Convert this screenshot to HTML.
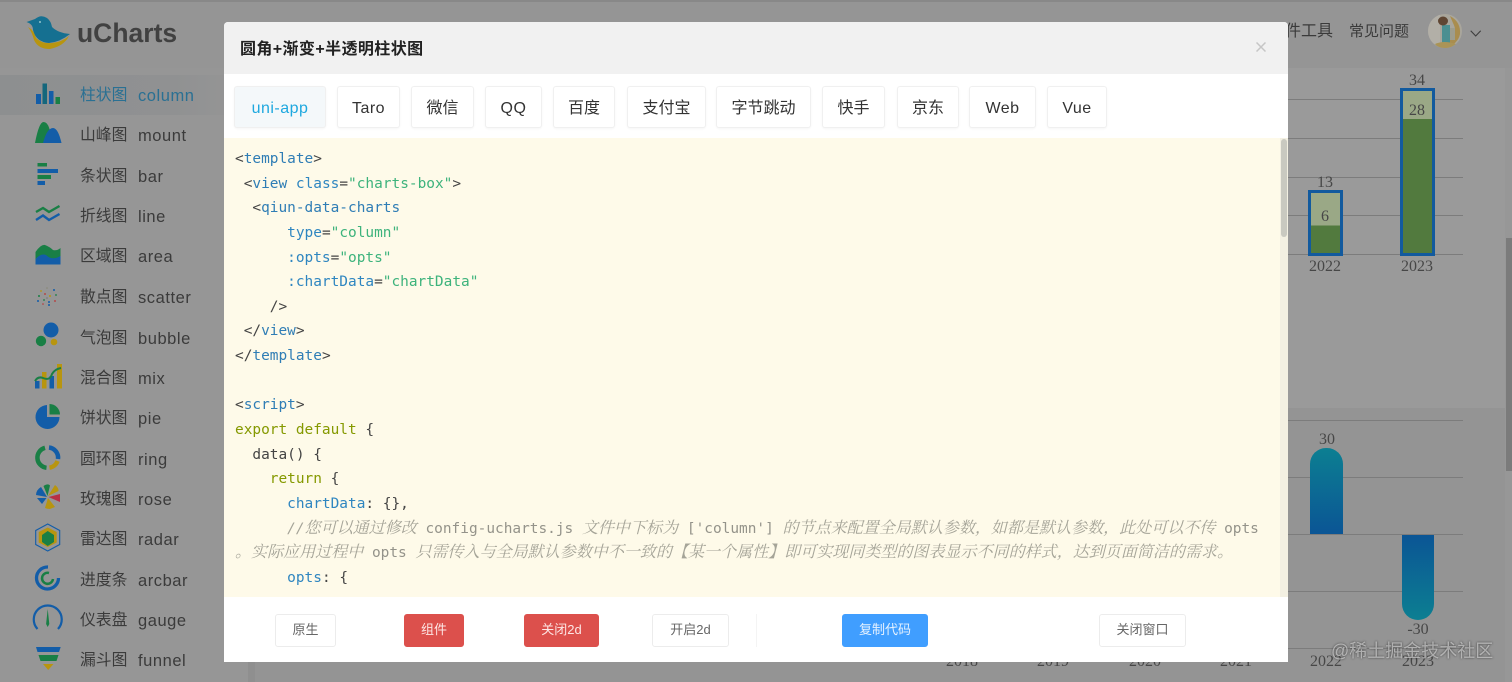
<!DOCTYPE html>
<html lang="zh"><head><meta charset="utf-8"><title>uCharts</title>
<style>
*{box-sizing:border-box;margin:0;padding:0}
html,body{width:1512px;height:682px;overflow:hidden;background:#969696}
body{position:relative;font-family:"Liberation Sans","Noto Sans CJK SC",sans-serif;color:#3a3a3a}
.a{position:absolute}
.si{position:absolute;left:80px;font-size:15.800px;line-height:24px;white-space:nowrap;color:#3b3b3b;margin-top:1px}
.si b{font-weight:400;position:absolute;left:58px;top:0;font-size:16.500px;letter-spacing:.55px}
.lb{position:absolute;margin-top:1px;font-family:"Liberation Serif",serif;font-size:16px;line-height:18px;color:#474747;transform:translateX(-50%);white-space:nowrap}
.g{position:absolute;left:1270px;width:193px;height:1px;background:#7c7c7c}
#modal{position:absolute;left:224px;top:22px;width:1064px;height:640px;background:#fff;border-radius:4px 4px 0 0;overflow:hidden}
#hd{height:52px;background:#f1f1f1;font-size:16px;font-weight:700;line-height:56px;padding-left:16px;color:#222;letter-spacing:.4px}
.tab{position:absolute;top:64px;height:42px;background:#fff;border:1px solid #f0f0f0;border-radius:3px;box-shadow:0 1px 2px rgba(0,0,0,.04);text-align:center;font-size:16px;line-height:43px;color:#333;white-space:nowrap}
.tab.l{letter-spacing:.5px}
#code{position:absolute;left:0;top:116px;width:1064px;height:459px;background:#fefae9;overflow:hidden}
#code pre{position:absolute;left:11px;top:9px;font-family:"DejaVu Sans Mono","Liberation Mono",monospace;font-size:14.450px;line-height:24.640px;color:#444;white-space:pre}
.t{color:#2f7db5}.s{color:#3db37c}.k{color:#859900}.p{color:#2f86c0}
.c{color:#a5a498;font-style:italic}.c i{font-family:"Noto Serif CJK SC",serif;font-size:16.050px;font-style:italic;line-height:0}
.c em{color:#94938a;font-style:normal}
.btn{position:absolute;top:592px;height:33px;border:1px solid #ececec;border-radius:3px;background:#fff;text-align:center;font-size:13px;line-height:30px;color:#666;white-space:nowrap}
.red{background:#dc504c;border-color:#dc504c;color:#fde6e5}
.blue{background:#409eff;border-color:#409eff;color:#e6f2ff}
#wm{position:absolute;left:1331px;top:639px;font-size:18px;line-height:24px;white-space:nowrap;color:rgba(210,210,210,.7);text-shadow:0 0 2px rgba(50,50,50,.9)}
</style></head><body>

<div class="a" style="left:0;top:0;width:1512px;height:68px;background:#959595;border-top:2px solid #888"></div>
<div class="a" style="left:255px;top:68px;width:1250px;height:340px;background:#9a9a9a"></div>
<div class="a" style="left:255px;top:408px;width:1250px;height:274px;background:#949494"></div>
<div class="a" style="left:1505px;top:68px;width:7px;height:614px;background:#979797"></div>
<div class="a" style="left:1506px;top:238px;width:6px;height:233px;background:#7b7b7b"></div>
<div class="a" style="left:248px;top:68px;width:7px;height:614px;background:#8f8f8f"></div>
<div class="a" style="left:0;top:75px;width:248px;height:40px;background:linear-gradient(90deg,#8d8f90,#909192 70%,#969696)"></div>

<svg class="a" style="left:0;top:0" width="250" height="682" viewBox="0 0 250 682">
<path fill="#b8950f" d="M28 27Q34 30 36 38Q42 44 52 43Q62 42 69 36Q64 46 50 49Q38 49 34 40Q32 32 28 27Z"/>
<path fill="#157091" d="M26.500 22L35 19Q41 14 47 18Q51 21 52 27Q58 33 70 34Q60 42 49 43Q36 42 33 30Q33 24 26.500 22Z"/>
<circle cx="40" cy="22" r=".9" fill="#bdd"/>
<g fill="#135da8"><rect x="36" y="94" width="5" height="10"/><rect x="49" y="91" width="4.500" height="13"/></g>
<g fill="#197f45"><rect x="55.500" y="97" width="4.500" height="7"/></g><rect x="42.500" y="83.500" width="4.500" height="20.500" fill="#15677c"/>
<path fill="#197f45" d="M35 143Q39 122 43.500 122Q48 122 50 131L50 143Z"/>
<path fill="#135da8" d="M43 143Q47 128 53 128Q58 128 61.500 143Z"/>
<g fill="#197f45"><rect x="37.500" y="163" width="9.500" height="3.500"/><rect x="37.500" y="175" width="13.500" height="4"/></g>
<g fill="#135da8"><rect x="37.500" y="169" width="20.500" height="4"/><rect x="37.500" y="181" width="7.500" height="4"/></g>
<polyline points="36,212 43,208 49,212 59.500,206" fill="none" stroke="#197f45" stroke-width="2.400"/>
<polyline points="36,220 43,215.500 49,220 59.500,214" fill="none" stroke="#135da8" stroke-width="2.400"/>
<path fill="#197f45" d="M35.500 264V252Q41 244 45 245Q50 247 53 250Q57 251 60.500 248V264Z"/>
<path fill="#135da8" d="M35.500 264.500V259Q41 253 46 255Q52 261 60.500 256V264.500Z"/>
<g>
<circle cx="47" cy="288" r=".8" fill="#887"/><circle cx="41" cy="291" r=".9" fill="#b8950f"/><circle cx="54" cy="290" r="1" fill="#135da8"/><circle cx="39" cy="296" r="1" fill="#197f45"/><circle cx="45" cy="294" r=".9" fill="#b33"/><circle cx="50" cy="296" r="1" fill="#b8950f"/><circle cx="56" cy="295" r=".9" fill="#197f45"/><circle cx="38" cy="301" r="1" fill="#135da8"/><circle cx="44" cy="300" r=".9" fill="#197f45"/><circle cx="49" cy="302" r="1" fill="#135da8"/><circle cx="55" cy="301" r=".9" fill="#b33"/><circle cx="43" cy="304" r=".8" fill="#b33"/><circle cx="49" cy="305" r="1" fill="#135da8"/><circle cx="47" cy="298" r=".8" fill="#777"/>
</g>
<circle cx="51" cy="330" r="7.500" fill="#135da8"/><circle cx="41" cy="341" r="5.200" fill="#197f45"/><circle cx="54" cy="342" r="3.300" fill="#b8950f"/>
<rect x="35" y="381" width="4.500" height="7.500" fill="#135da8"/><rect x="42" y="372" width="4.500" height="16.500" fill="#b8950f"/><rect x="49.500" y="376" width="4.500" height="12.500" fill="#135da8"/><rect x="57" y="364" width="5" height="24.500" fill="#b8950f"/>
<path d="M35 381Q38 376 43 378Q50 381 52 374Q55 369 61 368" fill="none" stroke="#197f45" stroke-width="2"/>
<path fill="#135da8" d="M47 405V417H59.500A12 12 0 1 1 47 405Z"/>
<path fill="#197f45" d="M49.500 404A10.500 10.500 0 0 1 60 414.500H49.500Z"/>
<g fill="none" stroke-width="4.500">
<path stroke="#135da8" d="M49 447.500A10.200 10.200 0 0 1 58 459"/>
<path stroke="#b8950f" d="M57.500 461A10.200 10.200 0 0 1 49.500 467.700"/>
<path stroke="#197f45" d="M46.500 467.800A10.200 10.200 0 0 1 45 447.800"/>
</g>
<path fill="#197f45" d="M47.500 496L43.500 486Q48 483 50 485.500Z"/>
<path fill="#b8950f" d="M48 496L55 485Q59 488 58.500 491Z"/>
<path fill="#b82f44" d="M48.500 497L60 494V502Z"/>
<path fill="#b8950f" d="M48 498L55 507L50 509Q47 509 45 508Z"/>
<path fill="#135da8" d="M47 497L36 495Q36 490 41 487Z"/>
<path fill="#135da8" d="M46.500 498L37 498L42 504Z"/>
<path d="M47.700 524L59.700 530.500V544.500L47.700 551L35.700 544.500V530.500Z" fill="none" stroke="#135da8" stroke-width="1.100"/>
<path d="M47.700 527.500L56.700 532V542.500L47.700 547L38.700 542.500V532Z" fill="#b8950f"/>
<path d="M47.700 531L54 535V542L47.700 546L42 542V535Z" fill="#197f45"/>
<path d="M48 567A11 11 0 1 0 58.500 578" fill="none" stroke="#135da8" stroke-width="3.300"/>
<path d="M49 573A5.500 5.500 0 1 0 53 579" fill="none" stroke="#197f45" stroke-width="2.500"/>
<path d="M37.500 629A14 14 0 1 1 58 629" fill="none" stroke="#135da8" stroke-width="2.200"/>
<path d="M47.700 609L49.300 624L47.700 627L46.100 624Z" fill="#197f45"/>
<path d="M36 647H60.700L59 652H37.500Z" fill="#135da8"/>
<path d="M38.500 655H58.500L56.500 661H40.500Z" fill="#197f45"/>
<path d="M43 664H53.500L48.200 670Z" fill="#b8950f"/>
</svg>

<div class="a" style="left:77px;top:16px;font-size:26.500px;font-weight:700;line-height:34px;color:#414141">uCharts</div>

<div class="si" style="top:83px;color:#2a7093">柱状图<b>column</b></div>
<div class="si" style="top:123px">山峰图<b>mount</b></div>
<div class="si" style="top:164px">条状图<b>bar</b></div>
<div class="si" style="top:204px">折线图<b>line</b></div>
<div class="si" style="top:244px">区域图<b>area</b></div>
<div class="si" style="top:285px">散点图<b>scatter</b></div>
<div class="si" style="top:326px">气泡图<b>bubble</b></div>
<div class="si" style="top:366px">混合图<b>mix</b></div>
<div class="si" style="top:406px">饼状图<b>pie</b></div>
<div class="si" style="top:447px">圆环图<b>ring</b></div>
<div class="si" style="top:487px">玫瑰图<b>rose</b></div>
<div class="si" style="top:527px">雷达图<b>radar</b></div>
<div class="si" style="top:568px">进度条<b>arcbar</b></div>
<div class="si" style="top:608px">仪表盘<b>gauge</b></div>
<div class="si" style="top:648px">漏斗图<b>funnel</b></div>

<div class="a" style="left:1269px;top:20px;font-size:16px;line-height:24px;color:#3a3a3a;white-space:nowrap">软件工具</div>
<div class="a" style="left:1349px;top:20px;font-size:15px;line-height:24px;color:#3a3a3a;white-space:nowrap">常见问题</div>
<svg class="a" style="left:1428px;top:14px" width="56" height="36" viewBox="0 0 56 36">
<defs><clipPath id="av"><circle cx="17" cy="17" r="17"/></clipPath></defs>
<g clip-path="url(#av)">
<rect width="34" height="34" fill="#a9a69c"/>
<path d="M0 8L12 0V34H0Z" fill="#b2afa7"/>
<path d="M22 2Q33 8 32 20Q30 30 18 34L22 24Q30 18 25 9Z" fill="#a98d4e"/>
<rect x="14" y="11" width="8" height="18" fill="#4a8f91"/>
<rect x="22" y="14" width="5" height="12" fill="#9d9d8e"/>
<ellipse cx="15" cy="7" rx="5" ry="4.500" fill="#5f4633"/>
<path d="M7 30Q16 26 28 30L24 34H10Z" fill="#aa9457"/>
</g>
<path d="M42.700 16.700L47.700 22L52.700 16.700" fill="none" stroke="#3d3d3d" stroke-width="1.100"/>
</svg>

<div class="g" style="top:99px"></div><div class="g" style="top:138px"></div><div class="g" style="top:177px"></div><div class="g" style="top:215px"></div><div class="g" style="top:254px"></div>
<div class="a" style="left:1307.500px;top:190px;width:35px;height:66px;border:3px solid #125a9e;background:linear-gradient(#9aa886 0,#9aa886 32.500px,#527a3e 32.500px)"></div>
<div class="a" style="left:1400px;top:88px;width:35px;height:168px;border:3px solid #125a9e;background:linear-gradient(#9aa886 0,#9aa886 28px,#527a3e 28px)"></div>
<div class="lb" style="left:1325px;top:173px">13</div><div class="lb" style="left:1325px;top:207px">6</div>
<div class="lb" style="left:1417px;top:71px">34</div><div class="lb" style="left:1417px;top:101px">28</div>
<div class="lb" style="left:1325px;top:257px">2022</div><div class="lb" style="left:1417px;top:257px">2023</div>

<div class="g" style="top:420px"></div><div class="g" style="top:477px"></div><div class="g" style="top:534px"></div><div class="g" style="top:591px"></div><div class="g" style="top:648px"></div>
<div class="a" style="left:1310px;top:448px;width:32.500px;height:86px;border-radius:16px 16px 0 0;background:linear-gradient(#0c7f92,#0b5595)"></div>
<div class="a" style="left:1401.500px;top:535px;width:32px;height:85px;border-radius:0 0 16px 16px;background:linear-gradient(#0b5595,#0c7f92)"></div>
<div class="lb" style="left:1327px;top:430px">30</div><div class="lb" style="left:1418px;top:620px">-30</div>
<div class="lb" style="left:962px;top:652px">2018</div><div class="lb" style="left:1053px;top:652px">2019</div><div class="lb" style="left:1145px;top:652px">2020</div><div class="lb" style="left:1236px;top:652px">2021</div>
<div class="lb" style="left:1326px;top:652px">2022</div><div class="lb" style="left:1418px;top:652px">2023</div>
<div id="wm">@稀土掘金技术社区</div>

<div id="modal">
<div id="hd">圆角+渐变+半透明柱状图</div>
<svg class="a" style="left:1032px;top:20px" width="10" height="10" viewBox="0 0 10 10"><path d="M.5.5L9.500 9.500M9.500.5L.5 9.500" stroke="#c6c6c6" stroke-width="1.500"/></svg>
<div class="tab l" style="left:10px;width:92px;background:#f4f8fa;color:#1ea8df">uni-app</div>
<div class="tab l" style="left:113px;width:63px">Taro</div>
<div class="tab" style="left:187px;width:63px">微信</div>
<div class="tab l" style="left:261px;width:57px">QQ</div>
<div class="tab" style="left:329px;width:62px">百度</div>
<div class="tab" style="left:403px;width:79px">支付宝</div>
<div class="tab" style="left:492px;width:95px">字节跳动</div>
<div class="tab" style="left:598px;width:63px">快手</div>
<div class="tab" style="left:673px;width:62px">京东</div>
<div class="tab l" style="left:745px;width:67px">Web</div>
<div class="tab l" style="left:823px;width:60px">Vue</div>
<div id="code"><pre>&lt;<span class="t">template</span>&gt;
 &lt;<span class="t">view</span> <span class="p">class</span>=<span class="s">"charts-box"</span>&gt;
  &lt;<span class="t">qiun-data-charts</span>
      <span class="p">type</span>=<span class="s">"column"</span>
      <span class="p">:opts</span>=<span class="s">"opts"</span>
      <span class="p">:chartData</span>=<span class="s">"chartData"</span>
    /&gt;
 &lt;/<span class="t">view</span>&gt;
&lt;/<span class="t">template</span>&gt;

&lt;<span class="t">script</span>&gt;
<span class="k">export default</span> {
  data() {
    <span class="k">return</span> {
      <span class="p">chartData</span>: {},
      <span class="c">//<i>您可以通过修改</i> <em>config-ucharts.js</em> <i>文件中下标为</i> <em>['column']</em> <i>的节点来配置全局默认参数，如都是默认参数，此处可以不传</i> <em>opts</em></span>
<span class="c"><i>。实际应用过程中</i> <em>opts</em> <i>只需传入与全局默认参数中不一致的【某一个属性】即可实现同类型的图表显示不同的样式，达到页面简洁的需求。</i></span>
      <span class="p">opts</span>: {</pre></div>
<div class="a" style="left:1056px;top:116px;width:8px;height:459px;background:#f3f0e2"></div>
<div class="a" style="left:1057px;top:117px;width:6px;height:98px;background:#c9c9c0;border-radius:3px"></div>
<div class="btn" style="left:51px;width:61px">原生</div>
<div class="btn red" style="left:180px;width:60px">组件</div>
<div class="btn red" style="left:300px;width:75px">关闭2d</div>
<div class="btn" style="left:428px;width:77px">开启2d</div>
<div class="a" style="left:532px;top:592px;width:1px;height:33px;background:#f4f4f4"></div>
<div class="btn blue" style="left:618px;width:86px">复制代码</div>
<div class="btn" style="left:875px;width:87px">关闭窗口</div>
</div>
</body></html>
